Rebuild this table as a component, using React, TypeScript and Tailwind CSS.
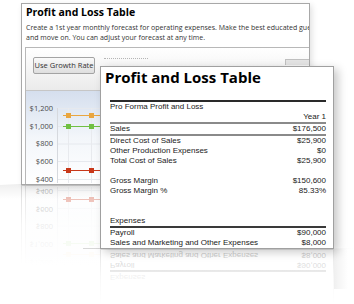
import React from "react";

function Chart() {
  const labels = [
    { t: "$1,200", y: 17 },
    { t: "$1,000", y: 35 },
    { t: "$800", y: 52.5 },
    { t: "$600", y: 70 },
    { t: "$400", y: 88 },
  ];
  const xs = [42, 65, 88, 111, 134, 157, 180, 203, 226, 249];
  const series = [
    { c: "#e9a640", y: 24 },
    { c: "#70c043", y: 35 },
    { c: "#c8381a", y: 79 },
  ];
  return (
    <svg width="284" height="92" className="block">
      {labels.map((l) => (
        <g key={l.t}>
          <line x1="31" x2="284" y1={l.y + 0.5} y2={l.y + 0.5} stroke="#e6e9ee" />
          <text
            x="27"
            y={l.y + 2.5}
            textAnchor="end"
            fontSize="7.5"
            fill="#4a4a4a"
            fontFamily="Open Sans, sans-serif"
          >
            {l.t}
          </text>
        </g>
      ))}
      <line x1="31.5" x2="31.5" y1="17" y2="92" stroke="#d6d9de" />
      {xs.map((x) => (
        <line key={x} x1={x + 0.5} x2={x + 0.5} y1="17" y2="92" stroke="#e8eaee" />
      ))}
      {series.map((s) => (
        <g key={s.c}>
          <line x1="37" x2="284" y1={s.y + 0.5} y2={s.y + 0.5} stroke={s.c} strokeWidth="1.2" />
          {xs.map((x) => (
            <rect key={x} x={x - 2} y={s.y - 2} width="5" height="5" fill={s.c} />
          ))}
        </g>
      ))}
    </svg>
  );
}

function BackWindow() {
  return (
    <div className="w-[289px] h-[182px] bg-white border border-[#a8a8a8] font-['Open_Sans',sans-serif] overflow-hidden flex flex-col">
      <div className="pl-[4px] pt-[1px] shrink-0">
        <div className="text-[10.5px] font-bold text-black leading-[14px]">Profit and Loss Table</div>
        <div className="mt-[4px] text-[7px] leading-[10px] text-[#333] whitespace-nowrap">
          <div>Create a 1st year monthly forecast for operating expenses. Make the best educated guess</div>
          <div>and move on. You can adjust your forecast at any time.</div>
        </div>
      </div>
      <div className="mt-[4px] ml-[3px] flex-1 border-l border-t border-[#b8b8b8] flex flex-col">
        <div className="h-[43px] shrink-0 bg-gradient-to-b from-white to-[#ebebeb] border-b border-[#c6c6c6] flex items-start pt-[9px] pl-[7px]">
          <div className="w-[63px] h-[17px] rounded-[2px] border border-[#a3a3a3] bg-gradient-to-b from-[#fafafa] to-[#dedede] flex items-center justify-center text-[7.5px] text-[#333]">
            Use Growth Rate
          </div>
          <div className="ml-[9px] mt-[1px] w-[45px] border-t border-dotted border-[#b5b5b5]" />
          <div className="ml-[137px] mt-[2px] w-[24px] h-[6px] border-t border-l border-[#c0c0c0] bg-[#e4e4e4]" />
        </div>
        <div className="flex-1 bg-gradient-to-b from-[#d5dfee] via-[#f3f6fa] to-white">
          <Chart />
        </div>
      </div>
    </div>
  );
}

const rows: { l: string; v: string }[] = [
  { l: "Direct Cost of Sales", v: "$25,900" },
  { l: "Other Production Expenses", v: "$0" },
  { l: "Total Cost of Sales", v: "$25,900" },
  { l: "", v: "" },
  { l: "Gross Margin", v: "$150,600" },
  { l: "Gross Margin %", v: "85.33%" },
  { l: "", v: "" },
  { l: "", v: "" },
];

function TRow({ l, v }: { l: string; v: string }) {
  return (
    <div className="h-[10px] leading-[10px] flex justify-between whitespace-nowrap">
      <span>{l}</span>
      <span>{v}</span>
    </div>
  );
}

function FrontWindow() {
  return (
    <div className="w-[234px] h-[183px] bg-white border border-[#a0a0a0] overflow-hidden">
      <div className="pl-[4px] pt-[1px] text-[15px] font-bold leading-[18px] text-black font-['Open_Sans',sans-serif]">
        Profit and Loss Table
      </div>
      <div className="ml-[9px] w-[216px] mt-[14px] font-['Liberation_Sans',Arial,sans-serif] text-[8px] text-[#1a1a1a]">
        <div className="border-t-2 border-[#2a2a2a]" />
        <TRow l="Pro Forma Profit and Loss" v="" />
        <TRow l="" v="Year 1" />
        <div className="border-t-2 border-[#8a8a8a]" />
        <TRow l="Sales" v="$176,500" />
        <div className="border-t-2 border-[#8a8a8a]" />
        {rows.map((r, i) => (
          <TRow key={i} l={r.l} v={r.v} />
        ))}
        <TRow l="Expenses" v="" />
        <div className="border-t-2 border-[#3a3a3a]" />
        <TRow l="Payroll" v="$90,000" />
        <TRow l="Sales and Marketing and Other Expenses" v="$8,000" />
      </div>
    </div>
  );
}

export default function App() {
  return (
    <div className="relative w-[354px] h-[304px] bg-white overflow-hidden">
      {/* back window reflection */}
      <div className="absolute left-[21px] top-[185px] w-[289px] h-[80px] overflow-hidden">
        <div className="absolute left-0 bottom-full origin-bottom -scale-y-100 opacity-45">
          <BackWindow />
        </div>
        <div className="absolute inset-0 bg-gradient-to-b from-white/10 via-white/75 to-white" />
      </div>
      {/* floor shadow under back window */}
      <div className="absolute left-0 top-[184px] w-[110px] h-px bg-gradient-to-r from-transparent via-[#cfcfcf] to-[#bdbdbd]" />
      <div className="absolute left-0 top-[185px] w-[110px] h-[14px] bg-gradient-to-b from-[#000]/[0.06] to-transparent" />

      {/* back window */}
      <div className="absolute left-[21px] top-[3px] shadow-[2px_2px_6px_rgba(0,0,0,0.12)]">
        <BackWindow />
      </div>

      {/* front window reflection */}
      <div className="absolute left-[100px] top-[249px] w-[236px] h-[55px] overflow-hidden bg-white">
        <div className="absolute left-0 bottom-full origin-bottom -scale-y-100 opacity-35">
          <FrontWindow />
        </div>
        <div className="absolute inset-0 bg-gradient-to-b from-white/20 via-white/80 to-white" />
      </div>
      <div className="absolute left-[83px] top-[248px] w-[270px] h-px bg-gradient-to-r from-[#d8d8d8] via-[#c4c4c4] to-transparent" />
      <div className="absolute left-[334px] top-[249px] w-[14px] h-[40px] bg-gradient-to-r from-[#000]/[0.06] to-transparent" />

      {/* front window */}
      <div className="absolute left-[100px] top-[66px] shadow-[4px_3px_9px_rgba(0,0,0,0.22)]">
        <FrontWindow />
      </div>
    </div>
  );
}
